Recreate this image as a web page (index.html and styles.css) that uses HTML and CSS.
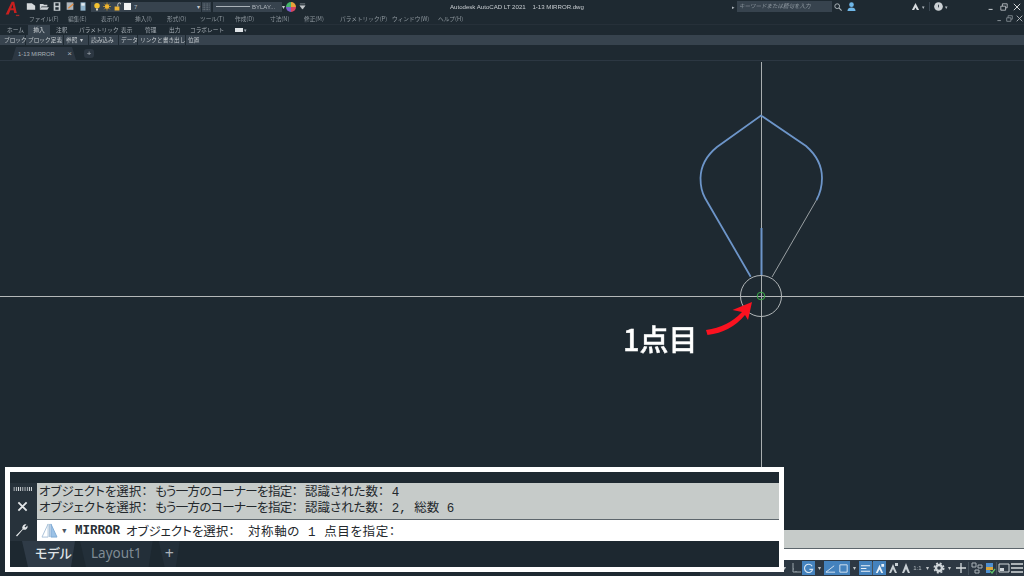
FILE: index.html
```html
<!DOCTYPE html>
<html lang="ja">
<head>
<meta charset="utf-8">
<title>AutoCAD LT 2021</title>
<link rel="stylesheet" href="styles.css">
</head>
<body>
<div class="app">
  <header class="titlebar soft">
    <svg class="logo" viewBox="0 0 20 20"><path d="M2 16 9 1h3l3 13h-3l-.6-3H7.500L5.500 16zM8.500 8.500h2.500L10 4z" fill="#c8201f"/><path d="M14 17h4" stroke="#a02a28" stroke-width="1.500"/></svg>
    <div class="qat">
      <svg class="qi" viewBox="0 0 12 10"><path d="M1 1h6l4 3v5H1z" fill="#d5d9dc"/></svg>
      <svg class="qi" viewBox="0 0 12 10"><path d="M1 2h4l1 1h4v2H3L1 9zM3 6h9l-2 3H1z" fill="#cfd4d8"/></svg>
      <svg class="qi" viewBox="0 0 12 10"><path d="M2 0h8v10H2zM4 1v3h4V1zM4 6v3h4V6z" fill="#c3cace" fill-rule="evenodd"/></svg>
      <svg class="qi" viewBox="0 0 12 10"><path d="M2 0h8v9H2z" fill="#aeb6bc"/><path d="M4 7 10 2" stroke="#e0873a" stroke-width="1.500"/></svg>
      <svg class="qi" viewBox="0 0 12 10"><path d="M3 0h6v10H3z" fill="#8fb4cc"/><path d="M4 1h4v3H4z" fill="#e4eaee"/></svg>
    </div>
    <div class="layer">
      <svg class="li" viewBox="0 0 10 10"><circle cx="5" cy="4" r="3.400" fill="#f2c230"/><path d="M3.800 7.500h2.400V10H3.800z" fill="#d8d8c8"/></svg>
      <svg class="li" viewBox="0 0 10 10"><circle cx="5" cy="5" r="2.800" fill="#f0b530"/><path d="M5 0v10M0 5h10M1.500 1.500l7 7M8.500 1.500l-7 7" stroke="#f0b530" stroke-width=".8"/></svg>
      <svg class="li" viewBox="0 0 10 10"><path d="M2 5h6v5H2z" fill="#eeb434"/><path d="M6 5V2.500a2 2 0 0 1 4 0" stroke="#e8e8e0" fill="none"/></svg>
      <span class="swatch"></span>
      <span class="layername">7</span>
      <span class="caret right">▾</span>
    </div>
    <svg class="pattern" viewBox="0 0 12 10"><path d="M1 1h10M1 3.500h10M1 6h10M1 8.500h10" stroke="#8a949c" stroke-dasharray="1 1"/></svg>
    <div class="ltype"><span class="ltline"></span><span>BYLAY...</span></div>
    <span class="caret">▾</span>
    <svg class="wheel" viewBox="0 0 10 10"><path d="M5 5V0a5 5 0 0 1 5 5z" fill="#e9a13a"/><path d="M5 5h5a5 5 0 0 1-5 5z" fill="#d8455f"/><path d="M5 5v5a5 5 0 0 1-5-5z" fill="#7a5fc8"/><path d="M5 5H0a5 5 0 0 1 5-5z" fill="#45b56a"/></svg>
    <svg class="qdrop" viewBox="0 0 8 8"><path d="M1 1h6M1 3h6L4 7z" stroke="#c3c8cc" fill="#c3c8cc" stroke-width=".6"/></svg>
    <div class="appname">Autodesk AutoCAD LT 2021&nbsp;&nbsp;&nbsp; 1-13 MIRROR.dwg</div>
    <span class="tinyarrow">▸</span>
    <div class="search">キーワードまたは語句を入力</div>
    <svg class="glass" viewBox="0 0 10 10"><circle cx="4" cy="4" r="3" fill="none" stroke="#aeb6bc" stroke-width="1.200"/><path d="m6.500 6.500 3 3" stroke="#aeb6bc" stroke-width="1.400"/></svg>
    <svg class="user" viewBox="0 0 10 10"><circle cx="5" cy="3" r="2.600" fill="#6fb7e8"/><path d="M.5 10c0-3 2-4 4.500-4s4.500 1 4.500 4z" fill="#6fb7e8"/></svg>
    <svg class="acct" viewBox="0 0 10 10"><path d="M5 1 1 9h2.500L5 6l1.500 3H9z" fill="#d8dcdf"/></svg>
    <span class="dot">▾</span>
    <span class="vsep"></span>
    <svg class="help" viewBox="0 0 10 10"><circle cx="5" cy="5" r="4.800" fill="#ccd1d5"/><path d="M5 3v3" stroke="#2b363f"/></svg>
    <span class="dot">▾</span>
    <div class="winctl">
      <svg viewBox="0 0 10 10"><path d="M2 8h5" stroke="#c7ccd0" stroke-width="1.300"/></svg>
      <svg viewBox="0 0 10 10"><path d="M1 4h6v5H1zM3 4V1h6v5H7" fill="none" stroke="#c7ccd0"/></svg>
      <svg viewBox="0 0 10 10"><path d="m1 1 8 8M9 1 1 9" stroke="#d8dcdf" stroke-width="1.200"/></svg>
    </div>
  </header>

  <nav class="menubar soft">
    <span class="m1">ファイル(F)</span><span class="m2">編集(E)</span><span class="m3">表示(V)</span><span class="m4">挿入(I)</span><span class="m5">形式(O)</span><span class="m6">ツール(T)</span><span class="m7">作成(D)</span><span class="m8">寸法(N)</span><span class="m9">修正(M)</span><span class="m10">パラメトリック(P)</span><span class="m11">ウィンドウ(W)</span><span class="m12">ヘルプ(H)</span>
    <div class="winctl small">
      <svg viewBox="0 0 10 10"><path d="M2 8h5" stroke="#9aa2a8" stroke-width="1.200"/></svg>
      <svg viewBox="0 0 10 10"><path d="M1 4h6v5H1zM3 4V1h6v5H7" fill="none" stroke="#9aa2a8"/></svg>
      <svg viewBox="0 0 10 10"><path d="m1 1 8 8M9 1 1 9" stroke="#c0c5c9" stroke-width="1.200"/></svg>
    </div>
  </nav>

  <div class="ribbontabs soft">
    <span class="t1">ホーム</span><span class="t2 active">挿入</span><span class="t3">注釈</span><span class="t4">パラメトリック</span><span class="t5">表示</span><span class="t6">管理</span><span class="t7">出力</span><span class="t8">コラボレート</span>
    <span class="t9"><i class="mini"></i>▾</span>
  </div>

  <div class="panels soft">
    <span class="p1">ブロック</span><span class="p2">ブロック定義</span><span class="p3">参照 &nbsp;▾</span><span class="p4">読み込み</span><span class="p5">データ</span><span class="p6">リンクと書き出し</span><span class="p7">位置</span>
  </div>

  <div class="doctabs soft">
    <div class="doctab"><span>1-13 MIRROR</span><b>×</b></div>
    <span class="newtab">+</span>
  </div>

  <main class="canvas">
    <svg class="drawing" viewBox="0 0 1024 576">
      <g fill="none">
        <path d="M0 296.500H1024" stroke="#b4b8b9" stroke-width="1"/>
        <path d="M761.500 62V476" stroke="#a9aeb0" stroke-width="1"/>
        <path d="M772 277 816.500 200" stroke="#9aa0a3" stroke-width="1"/>
        <path d="M750.700 276.700 705 198Q700.500 190 700.500 178Q701 160 717 147L761 115.500L806 146Q822 160 822 178Q822 190 816.500 200" stroke="#6d95c9" stroke-width="1.800"/>
        <path d="M761.500 228V275" stroke="#6d95c9" stroke-width="2"/>
        <circle cx="761" cy="296" r="20.500" stroke="#b3b8ba" stroke-width="1"/>
        <circle cx="761" cy="296" r="3.800" stroke="#3fae4a" stroke-width="1"/>
      </g>
      <path d="M706 330Q728 327 742 312L732.500 310L752 302L748 320L745 315Q731 332 707.500 335Z" fill="#fb1220"/>
    </svg>
    <div class="callout">1点目</div>
  </main>

  <div class="cmdhist"></div>
  <div class="cmdline"></div>
  <footer class="statusbar soft">
    <span class="caret s">▾</span>
    <svg class="si" viewBox="0 0 12 12"><path d="M3 1v9h8M3 7h1M6 9v1" stroke="#9aa4ac" fill="none"/></svg>
    <span class="bluebtn"><svg viewBox="0 0 12 12"><path d="M10 3.500A4.500 4.500 0 1 0 10.500 7H7" stroke="#dce8f3" fill="none" stroke-width="1.200"/></svg></span>
    <span class="caret s">▾</span>
    <span class="bluebtn"><svg viewBox="0 0 12 12"><path d="M1 10 10 3M1 10h10" stroke="#dce8f3"/></svg></span>
    <span class="bluebtn"><svg viewBox="0 0 12 12"><path d="M2 2h8v8H2z" stroke="#dce8f3" fill="none"/></svg></span>
    <span class="caret s">▾</span>
    <span class="bluebtn"><svg viewBox="0 0 12 12"><path d="M1 3h10M1 6h6M1 9h10" stroke="#eaf1f7" stroke-width="1.300"/></svg></span>
    <span class="sep"></span>
    <span class="bluebtn"><svg viewBox="0 0 12 12"><path d="M6 2 2 11h2l2-4 2 4h2zM8 1h3v3H8z" fill="#eaf1f7"/></svg></span>
    <svg class="si" viewBox="0 0 12 12"><path d="M6 2 2 11h2l2-4 2 4h2zM8 1h3v3H8z" fill="#c7ced3"/></svg>
    <svg class="si" viewBox="0 0 12 12"><path d="M6 1 2 11h2l2-4 2 4h2z" fill="#c7ced3"/></svg>
    <span class="ratio">1:1</span>
    <span class="caret s">▾</span>
    <svg class="si" viewBox="0 0 12 12"><circle cx="6" cy="6" r="3" fill="none" stroke="#cfd5d9" stroke-width="2.400"/><circle cx="6" cy="6" r="4.800" fill="none" stroke="#cfd5d9" stroke-width="1.400" stroke-dasharray="2 1.800"/></svg>
    <span class="caret s">▾</span>
    <svg class="si" viewBox="0 0 12 12"><path d="M6 1v10M1 6h10" stroke="#d5dadd" stroke-width="1.300"/></svg>
    <span class="sep wide"></span>
    <svg class="si" viewBox="0 0 12 12"><path d="M1 1h4v4H1zM7 3h4v3H7zM4 8h4v3H4z" fill="none" stroke="#aab2b8"/></svg>
    <svg class="si" viewBox="0 0 12 12"><path d="M2 1h7v4H2z" fill="#4f8fd0"/><path d="M2 5h7v3H2z" fill="#d9a53a"/><path d="M2 8h4v3H2z" fill="#4f8fd0"/><path d="m6 9 2 2 3-4" stroke="#5ec46a" fill="none" stroke-width="1.300"/></svg>
    <span class="sep"></span>
    <svg class="si" viewBox="0 0 12 12"><path d="M1 2h10v8H1z" fill="none" stroke="#cfd5d9"/><path d="M2 6h4v3H2z" fill="#cfd5d9"/></svg>
    <svg class="si" viewBox="0 0 12 12"><path d="M0 2h12M0 6h12M0 10h12" stroke="#d5dadd" stroke-width="1.400"/></svg>
  </footer>

  <section class="cmd">
    <div class="cmdtop"></div>
    <div class="cmdbody">
      <div class="grip">
        <span class="dots"></span>
        <svg class="closex" viewBox="0 0 12 12"><path d="m1.500 1.500 9 9M10.500 1.500l-9 9" stroke="#e3e6e8" stroke-width="2"/></svg>
        <svg class="wrench" viewBox="0 0 14 14"><path d="M1 12.500 7.500 6a3.300 3.300 0 0 1 4-4.500L9.500 3.500 10.500 4.500 12.500 2.500a3.300 3.300 0 0 1-4.500 4L2 13.500z" fill="#e3e6e8"/></svg>
      </div>
      <div class="cmdtext">
        <div class="history">
          <p>オブジェクトを選択： <span class="mid">もう一方のコーナーを指定：</span> 認識された数： 4</p>
          <p>オブジェクトを選択： <span class="mid">もう一方のコーナーを指定：</span> 認識された数： 2, 総数 6</p>
        </div>
        <div class="prompt">
          <svg class="mirroricon" viewBox="0 0 18 16"><path d="M7.500 1 1 15h6.500z" fill="none" stroke="#a8c0d8"/><path d="M9 1v14" stroke="#a8c0d8"/><path d="M10.500 1 17 15h-6.500z" fill="#9cc2e6" stroke="#7da9d3"/></svg>
          <span class="pcaret">▾</span>
          <b>MIRROR</b><span class="pa">オブジェクトを選択：</span><span class="pb">対称軸の 1 点目を指定：</span>
        </div>
      </div>
    </div>
    <div class="cmdtabs">
      <span class="ctab on">モデル</span><span class="ctab">Layout1</span><span class="ctab plus">+</span>
    </div>
  </section>
</div>
</body>
</html>
```
FILE: styles.css
```css
* { box-sizing: border-box; }
html, body { margin: 0; height: 100%; }
body { background: #1e2931; overflow: hidden; font-family: "Noto Sans CJK JP", "Noto Sans", sans-serif; }
.app { position: relative; width: 1024px; height: 576px; display: flex; flex-direction: column; background: #1e2931; color: #b3bac0; }
.soft { filter: blur(.35px); }
svg { display: block; }

.titlebar { height: 13px; display: flex; align-items: center; padding-left: 4px; flex: none; }
.logo { width: 17px; height: 17px; margin-top: 6px; flex: none; }
.qat { display: flex; gap: 3px; margin-left: 5px; }
.qi { width: 10px; height: 9px; }
.layer { width: 110px; height: 10px; margin-left: 3px; background: #37434e; display: flex; align-items: center; padding-left: 2px; gap: 2px; }
.li { width: 8px; height: 9px; }
.swatch { width: 7px; height: 7px; background: #f1f3f4; margin-left: 1px; }
.layername { font: 6px "Liberation Sans", sans-serif; margin-left: 1px; }
.caret { font-size: 6px; line-height: 8px; color: #c3c8cc; }
.caret.right { margin-left: auto; margin-right: 1px; }
.pattern { width: 9px; height: 10px; margin-left: 1px; background: #37434e; }
.ltype { width: 69px; height: 10px; margin-left: 2px; background: #37434e; display: flex; align-items: center; font: 6px "Liberation Sans", sans-serif; padding-left: 3px; gap: 2px; }
.ltline { width: 34px; border-top: 1px solid #aab2b8; }
.wheel { width: 10px; height: 10px; margin-left: 1px; }
.qdrop { width: 7px; height: 7px; margin-left: 3px; }
.appname { font: 6.100px "Liberation Sans", sans-serif; color: #c8cdd1; width: 165px; margin-left: 144px; white-space: nowrap; flex: none; }
.tinyarrow { font-size: 5px; width: 5px; margin-left: 117px; flex: none; }
.search { width: 95px; height: 11px; background: #37434e; font-size: 5.500px; line-height: 11px; padding-left: 2px; font-style: italic; color: #8f99a1; white-space: nowrap; flex: none; }
.glass { width: 8px; height: 8px; margin-left: 2px; flex: none; }
.user { width: 9px; height: 9px; margin-left: 5px; flex: none; }
.acct { width: 9px; height: 9px; margin-left: 55px; flex: none; }
.dot { font-size: 5px; margin-left: 2px; }
.vsep { width: 1px; height: 9px; background: #3a4651; margin-left: 4px; }
.help { width: 9px; height: 9px; margin-left: 4px; }
.winctl { display: flex; gap: 5px; margin-left: auto; margin-right: 3px; }
.winctl svg { width: 8px; height: 8px; }
.winctl.small { gap: 3px; margin-right: 1px; margin-top: -1px; }
.winctl.small svg { width: 7px; height: 7px; }

.menubar { height: 11px; display: flex; align-items: center; font-size: 5.700px; line-height: 11px; color: #8f989f; flex: none; padding-left: 29px; white-space: nowrap; }
.menubar span { display: block; flex: none; }
.m1 { width: 39px; } .m2 { width: 33px; } .m3 { width: 34px; } .m4 { width: 32px; } .m5 { width: 33px; } .m6 { width: 35px; } .m7 { width: 35px; } .m8 { width: 34px; } .m9 { width: 36px; } .m10 { width: 52px; } .m11 { width: 46px; }

.ribbontabs { height: 11px; display: flex; font-size: 5.700px; line-height: 10px; color: #a3abb2; flex: none; white-space: nowrap; border-top: 1px solid #263039; }
.ribbontabs span { display: block; flex: none; }
.t1 { width: 28px; padding-left: 7px; }
.t2 { width: 22px; text-align: center; }
.t2.active { background: #37434e; color: #d4d9dc; }
.t3 { margin-left: 6px; width: 23px; } .t4 { width: 42px; } .t5 { width: 24px; } .t6 { width: 24px; } .t7 { width: 21px; } .t8 { width: 45px; }
.t9 { font-size: 5px; }
.mini { display: inline-block; width: 8px; height: 4px; background: #dfe3e6; margin-right: 1px; }

.panels { height: 10px; background: #37434e; display: flex; font-size: 5.700px; line-height: 10px; color: #c3c9cd; padding-left: 2px; flex: none; white-space: nowrap; }
.panels span { display: block; flex: none; padding-left: 2px; border-right: 1px solid #1e2931; }
.p1 { width: 24px; } .p2 { width: 38px; } .p3 { width: 25px; } .p4 { width: 30px; } .p5 { width: 19px; } .p6 { width: 48px; } .p7 { width: 24px; border-right: 0 !important; }

.doctabs { height: 14px; margin-top: 2px; display: flex; align-items: flex-end; flex: none; padding-left: 12px; border-bottom: 1px solid #2c3742; }
.doctab { width: 64px; height: 13px; background: #2c3742; display: flex; align-items: center; justify-content: space-between; padding: 0 4px 0 6px; font: 5.800px "Liberation Sans", sans-serif; color: #a9b1b7; clip-path: polygon(4px 0, 60px 0, 100% 100%, 0 100%); }
.doctab b { font-weight: 400; font-size: 8px; }
.newtab { font: 8px "Liberation Sans", sans-serif; color: #aab2b8; margin: 0 0 2px 8px; width: 10px; height: 9px; text-align: center; background: #2c3742; border-radius: 3px; line-height: 9px; }

.canvas { flex: 1; position: relative; }
.drawing { position: absolute; left: 0; top: -61px; width: 1024px; height: 576px; }
.callout { position: absolute; left: 623px; top: 255px; font-size: 29px; line-height: 44px; font-weight: 500; -webkit-text-stroke: .4px #fff; color: #fff; white-space: nowrap; }

.cmdhist { height: 19px; margin-left: 700px; background: #c6cbc9; flex: none; border-bottom: 1px solid #5d666c; }
.cmdline { height: 11px; margin-left: 700px; background: #fff; flex: none; }
.statusbar { height: 16px; margin-left: 700px; background: #2d3843; display: flex; align-items: center; justify-content: flex-end; padding-right: 1px; flex: none; }
.si { width: 12px; height: 12px; margin: 0 .5px; flex: none; }
.bluebtn { width: 13px; height: 14px; background: #4482bd; display: flex; align-items: center; justify-content: center; flex: none; }
.bluebtn svg { width: 11px; height: 11px; }
.caret.s { width: 9px; text-align: center; flex: none; }
.sep { width: 1px; height: 13px; background: #46525c; flex: none; }
.sep.wide { margin: 0 1px; }
.ratio { font: 6px "Liberation Sans", sans-serif; color: #b6bdc2; width: 11px; flex: none; text-align: center; }

.cmd { position: absolute; left: 5px; top: 467px; width: 779px; height: 105px; border: 5px solid #fff; background: #1d2830; display: flex; flex-direction: column; }
.cmdtop { height: 11px; background: #1e2931; flex: none; }
.cmdbody { display: flex; height: 58px; flex: none; }
.grip { width: 27px; flex: none; display: flex; flex-direction: column; align-items: center; background: #27323b; padding: 4px 3px 0 0; }
.dots { width: 19px; height: 4px; flex: none; background-image: radial-gradient(circle, #dfe3e6 .7px, transparent .9px); background-size: 2.200px 2px; }
.closex { width: 11px; height: 11px; margin-top: 10px; flex: none; }
.wrench { width: 14px; height: 14px; margin-top: 11px; flex: none; }
.cmdtext { flex: 1; display: flex; flex-direction: column; min-width: 0; font-family: "Liberation Mono", "Noto Sans CJK JP", monospace; font-size: 12.500px; font-feature-settings: "palt"; color: #23282c; }
.history { height: 37px; background: #c6cbc9; padding: 2px 0 0 2px; line-height: 16px; border-bottom: 1px solid #5d666c; flex: none; }
.history p { margin: 0; white-space: nowrap; }
.mid { letter-spacing: -.6px; }
.prompt { height: 21px; background: #fff; display: flex; align-items: center; white-space: nowrap; flex: none; }
.mirroricon { width: 17px; height: 15px; margin-left: 4px; flex: none; }
.pcaret { font-size: 11px; color: #4a555e; margin-left: 3px; width: 14px; flex: none; }
.prompt b { font-weight: 700; width: 51px; color: #2a3036; flex: none; }
.pa { width: 122px; flex: none; }
.pb { letter-spacing: .6px; }
.cmdtabs { display: flex; flex: 1; align-items: stretch; padding-left: 12px; background: #1d2830; gap: 5px; overflow: hidden; }
.ctab { flex: none; white-space: nowrap; padding: 0 11px 0 11px; font: 13.500px/24px "Noto Sans", sans-serif; color: #7f8b94; background: #232f39; clip-path: polygon(0 0, 100% 0, calc(100% - 4px) 100%, 6px 100%); }
.ctab.on { width: 53px; padding: 0 0 0 13px; color: #dfe3e6; background: #2f3b47; font: 500 13px/24px "Noto Sans CJK JP", sans-serif; font-feature-settings: "palt"; }
.ctab.plus { padding: 0 6px; margin-left: 1px; color: #aab2b8; font-size: 16px; }
```
